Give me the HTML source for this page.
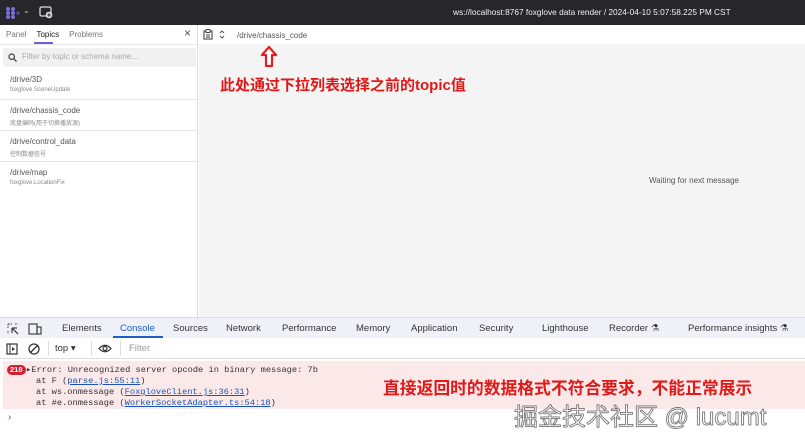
<!DOCTYPE html><html><head><meta charset="utf-8"><style>
*{margin:0;padding:0;box-sizing:border-box}
body{width:805px;height:445px;overflow:hidden;font-family:"Liberation Sans","Noto Sans CJK SC",sans-serif;background:#fff;position:relative}
.a{position:absolute}
.topbar{left:0;top:0;width:805px;height:25px;background:#26262b}
.side{left:0;top:25px;width:198px;height:292px;background:#fff;border-right:1px solid #ddd}
.main{left:199px;top:25px;width:606px;height:292px;background:#f4f4f4}
.tabs span{font-size:8px;color:#777;margin-right:10px}
.item{position:absolute;left:0;width:197px;height:31px;border-bottom:1px solid #e6e6e6}
.item b{position:absolute;left:10px;top:6px;font-weight:normal;font-size:8px;color:#555}
.item i{position:absolute;left:10px;top:18px;font-style:normal;font-size:6px;color:#888}
.dt{left:0;top:317px;width:805px;height:21px;background:#eef2f8;border-top:1px solid #d8dde6;font-size:9.5px;color:#333}
.dt span{position:absolute;top:5px}
.tb{left:0;top:338px;width:805px;height:21px;background:#fff;border-bottom:1px solid #ddd}
.err{left:3px;top:361px;width:802px;height:48px;background:#fbe9ea;font-family:"Liberation Mono",monospace;font-size:8.7px;color:#333}
.err div{position:absolute;white-space:nowrap}
.err u{color:#1a55b5}
</style></head><body>
<div class="a topbar">
<svg class="a" style="left:5px;top:6px" width="16" height="14"><g fill="#7b6fd6"><circle cx="3" cy="3" r="2"/><circle cx="8" cy="3" r="2"/><circle cx="3" cy="7" r="2"/><circle cx="8" cy="7" r="2"/><circle cx="13" cy="7" r="1.6" fill="#5a4fa8"/><circle cx="3" cy="11" r="2"/><circle cx="8" cy="11" r="2"/></g></svg>
<span class="a" style="left:23px;top:6px;color:#ccc;font-size:8px">⌄</span>
<svg class="a" style="left:39px;top:6px" width="14" height="13"><rect x="1" y="1" width="11" height="9" rx="1.5" fill="none" stroke="#ddd" stroke-width="1.3"/><circle cx="10" cy="9" r="3.3" fill="#ddd"/><path d="M10 7.3v3.4M8.3 9h3.4" stroke="#26262b" stroke-width="1"/></svg>
<span class="a" style="left:453px;top:7px;color:#f2f2f2;font-size:8.3px;white-space:nowrap">ws://localhost:8767 foxglove data render / 2024-04-10 5:07:58.225 PM CST</span>
</div>
<div class="a side">
<div class="a tabs" style="left:6px;top:3px;white-space:nowrap;line-height:10px"><span>Panel</span><span style="color:#222">Topics</span><span>Problems</span></div>
<div class="a" style="left:34px;top:17px;width:19px;height:2px;background:#6f5fd0"></div>
<span class="a" style="left:184px;top:1px;font-size:12px;color:#555">×</span>
<div class="a" style="left:0;top:19px;width:197px;height:1px;background:#e6e6e6"></div>
<div class="a" style="left:3px;top:23px;width:193px;height:19px;background:#f1f1f1;border-radius:2px"></div>
<svg class="a" style="left:8px;top:28px" width="9" height="9"><circle cx="3.7" cy="3.7" r="2.7" fill="none" stroke="#444" stroke-width="1.2"/><path d="M5.8 5.8L8.5 8.5" stroke="#444" stroke-width="1.3"/></svg>
<span class="a" style="left:22px;top:27px;font-size:8px;color:#aaa">Filter by topic or schema name...</span>
<div class="item" style="top:44px"><b>/drive/3D</b><i>foxglove.SceneUpdate</i></div>
<div class="item" style="top:75px"><b>/drive/chassis_code</b><i>底盘编码(用于切换播放源)</i></div>
<div class="item" style="top:106px"><b>/drive/control_data</b><i>控制数据信号</i></div>
<div class="item" style="top:137px;border:none"><b>/drive/map</b><i>foxglove.LocationFix</i></div>
</div>
<div class="a main">
<div class="a" style="left:0;top:0;width:606px;height:19px;background:#fff"></div>
<svg class="a" style="left:4px;top:4px" width="10" height="11"><rect x="1" y="2" width="8" height="8" fill="none" stroke="#444" stroke-width="1.1"/><rect x="3" y="0.5" width="4" height="3" fill="#fff" stroke="#444"/><path d="M3 6h4M3 8h4" stroke="#444"/></svg>
<svg class="a" style="left:20px;top:5px" width="6" height="9"><path d="M1 3l2-2 2 2M1 6l2 2 2-2" fill="none" stroke="#555"/></svg>
<span class="a" style="left:38px;top:6px;font-size:8px;color:#555">/drive/chassis_code</span>
<svg class="a" style="left:61px;top:21px" width="18" height="22"><path d="M9 1L16 9H12V20H6V9H2Z" fill="#fff" stroke="#e02020" stroke-width="2.2" stroke-linejoin="round"/></svg>
<span class="a" style="left:21px;top:49px;font-size:15px;font-weight:bold;color:#e01818;white-space:nowrap">此处通过下拉列表选择之前的topic值</span>
<span class="a" style="left:450px;top:151px;font-size:8px;color:#555">Waiting for next message</span>
</div>
<div class="a dt">
<svg class="a" style="left:7px;top:5px" width="12" height="12"><path d="M1 1h4M1 1v4M1 8v3M8 1h3" stroke="#444" stroke-dasharray="1.5 1"/><path d="M5 5l6 6M5 5v5M5 5h5" stroke="#444" stroke-width="1.3"/></svg>
<svg class="a" style="left:28px;top:5px" width="14" height="12"><rect x="1" y="1" width="8" height="10" fill="none" stroke="#444" stroke-width="1.2"/><rect x="9" y="4" width="4" height="7" fill="none" stroke="#444" stroke-width="1.2"/></svg>
<span style="left:62px">Elements</span><span style="left:120px;color:#1a5fc7">Console</span><span style="left:173px">Sources</span><span style="left:226px">Network</span><span style="left:282px">Performance</span><span style="left:356px">Memory</span><span style="left:411px">Application</span><span style="left:479px">Security</span><span style="left:542px">Lighthouse</span><span style="left:609px">Recorder ⚗</span><span style="left:688px">Performance insights ⚗</span>
<div class="a" style="left:113px;top:18px;width:50px;height:2px;background:#1a5fc7"></div>
</div>
<div class="a tb">
<svg class="a" style="left:6px;top:5px" width="12" height="12"><rect x="1" y="1" width="10" height="10" fill="none" stroke="#333" stroke-width="1.2"/><path d="M4 1v10" stroke="#333"/><path d="M6 4l3 2-3 2z" fill="#333"/></svg>
<svg class="a" style="left:27px;top:4px" width="14" height="14"><circle cx="7" cy="7" r="5" fill="none" stroke="#333" stroke-width="1.3"/><path d="M3.5 10.5l7-7" stroke="#333" stroke-width="1.3"/></svg>
<div class="a" style="left:48px;top:3px;width:1px;height:15px;background:#ddd"></div>
<span class="a" style="left:55px;top:5px;font-size:9.5px;color:#333">top ▾</span>
<div class="a" style="left:91px;top:3px;width:1px;height:15px;background:#ddd"></div>
<svg class="a" style="left:98px;top:5px" width="14" height="11"><path d="M1 5.5Q7 -1 13 5.5Q7 12 1 5.5Z" fill="none" stroke="#333" stroke-width="1.2"/><circle cx="7" cy="5.5" r="2" fill="none" stroke="#333" stroke-width="1.2"/></svg>
<div class="a" style="left:120px;top:3px;width:685px;height:15px;border-left:1px solid #ddd"></div>
<span class="a" style="left:129px;top:5px;font-size:9.5px;color:#999">Filter</span>
</div>
<div class="a err">
<div style="left:4px;top:4px;background:#d32030;color:#fff;border-radius:7px;padding:0 3px;font-size:7.5px;line-height:10px;font-family:'Liberation Sans',sans-serif;font-weight:bold">218</div>
<div style="left:23px;top:4px">▸Error: Unrecognized server opcode in binary message: 7b</div>
<div style="left:33px;top:15px">at F (<u>parse.js:55:11</u>)</div>
<div style="left:33px;top:26px">at ws.onmessage (<u>FoxgloveClient.js:36:31</u>)</div>
<div style="left:33px;top:37px">at #e.onmessage (<u>WorkerSocketAdapter.ts:54:18</u>)</div>
<div style="left:380px;top:14px;font-family:'Liberation Sans','Noto Sans CJK SC',sans-serif;font-size:16.8px;font-weight:bold;color:#e01818">直接返回时的数据格式不符合要求，不能正常展示</div>
</div>
<span class="a" style="left:8px;top:412px;color:#1a5fc7;font-size:10px">›</span>
<span class="a" style="left:514px;top:397px;font-size:24px;color:#fff;-webkit-text-stroke:0.7px #666;white-space:nowrap;text-shadow:0 0 1px #555">掘金技术社区 @ lucumt</span>
</body></html>
